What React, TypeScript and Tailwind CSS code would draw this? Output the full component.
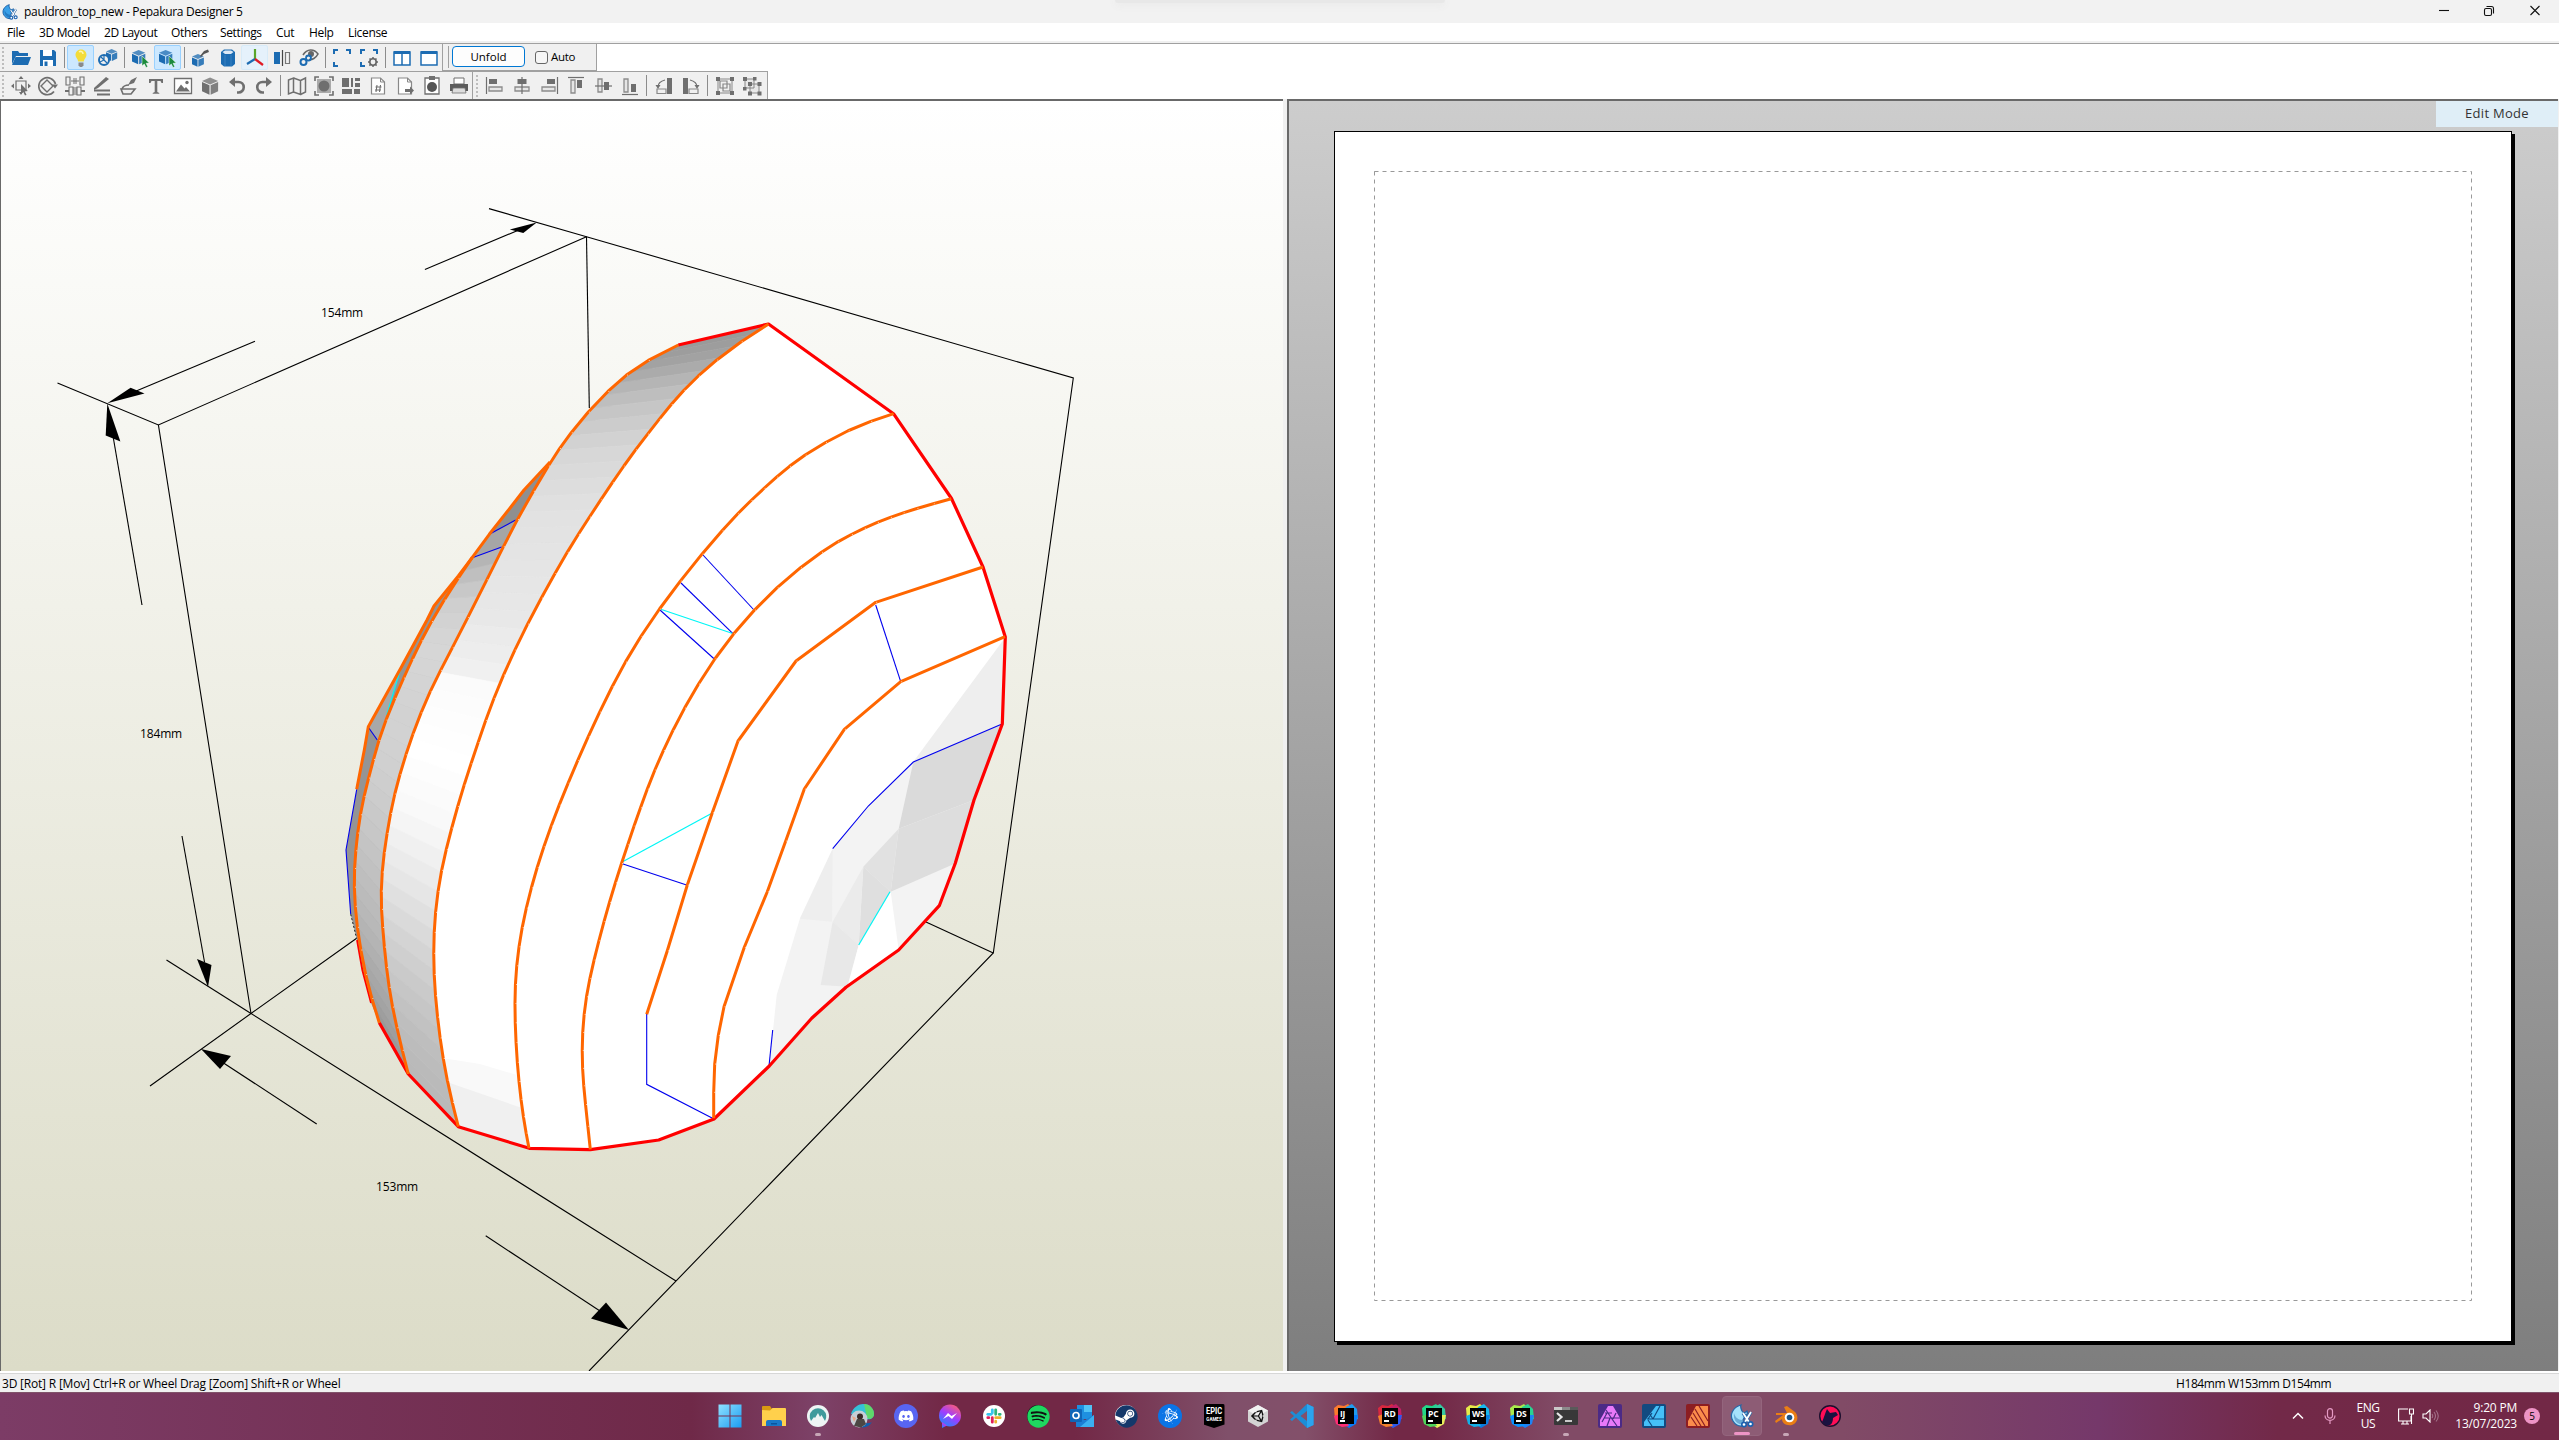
import React from "react";
import { FaDiscord, FaSpotify, FaSteam, FaBattleNet, FaUnity } from "react-icons/fa";

type Pt = [number, number];

const UI = "font-['Open_Sans','Noto_Sans',sans-serif]";

/* ---------- 3D model data ---------- */

/** Evens out small kinks between neighbouring vertices, keeping both ends. */
const smooth = (p: Pt[]): Pt[] =>
  p.map((q, i) =>
    i === 0 || i === p.length - 1
      ? q
      : [q[0] / 2 + (p[i - 1][0] + p[i + 1][0]) / 4, q[1] / 2 + (p[i - 1][1] + p[i + 1][1]) / 4],
  );

const seamA: Pt[] = smooth([
  [678.3, 345], [644, 361], [626.7, 374.7], [608.3, 390], [588.3, 411], [568.3, 436], [560, 447.7], [550, 462.7],
  [533.3, 491], [516.7, 520], [503.3, 546.7], [490, 574], [464.3, 624], [452.3, 648.3], [440, 670.7], [430, 691.7],
  [420.7, 712.7], [412.7, 734.3], [405.7, 755], [399.500, 775], [394.7, 794], [390.3, 813], [387, 834], [384, 852.7],
  [382, 871.7], [381, 891.7], [381.3, 909], [382.6, 927], [384.3, 946.7], [386.4, 967.7], [389, 987.3],
  [392.3, 1006.7], [396.7, 1027], [402, 1050], [408.3, 1074],
]);
const seamB: Pt[] = smooth([
  [768.5, 324], [741, 341], [714.3, 361.3], [697.7, 376.3], [683.500, 390], [671, 404.500], [659.3, 419], [647.7, 434], [635.7, 449.3],
  [623.7, 466], [612.3, 482.7], [601, 499.3], [589.3, 517.3], [578.3, 534.3], [567.500, 551.3], [555.5, 572.500],
  [541.3, 597.7], [527.3, 624], [514.7, 650], [503, 675.7], [493.7, 698.3], [485.500, 720.7], [478, 742.7],
  [471, 763.8], [464, 785], [457.600, 806.3], [451.6, 828.3], [446.2, 849], [441.3, 870.3], [437.8, 891.7],
  [435.3, 912.3], [434, 932.3], [433.5, 953.3], [434, 974.3], [435.3, 995.7], [437.500, 1017.3], [440, 1038],
  [443, 1058.3], [447, 1079.7], [452, 1102], [458.3, 1126.7],
]);
const seamBack: Pt[] = [
  [550, 462], [524, 490], [509.3, 509], [489.3, 534.3], [472.3, 557.3], [458.3, 576], [434, 606], [427, 620],
  [401, 667.7], [368.3, 726.7], [364.3, 750], [356.7, 789.3],
];
const seamD: Pt[] = smooth([
  [472.3, 557.3], [458, 578], [444, 600], [430.7, 622.3], [421, 641], [412.2, 659], [403.500, 678], [395.5, 697], [385, 721],
  [378.7, 740.7], [373.3, 759.7], [368.500, 778.3], [364, 796], [360, 815], [357.600, 833], [355.7, 850.7], [354.3, 868.3], [354.1, 886.7],
  [355, 906], [357, 926.7], [360.5, 949.3], [365.4, 975], [371.4, 998.3], [379.3, 1022.7],
]);
const seamE: Pt[] = smooth([
  [893.7, 413.7], [870.7, 421], [848, 430], [825.7, 442], [802.7, 456], [789.3, 466.3], [776.7, 476.7],
  [764.3, 488], [751, 500.3], [738, 513.3], [724, 528], [702.3, 553.3], [680, 581], [659, 609], [640, 637],
  [625, 662], [612, 686.500], [599.500, 712], [588, 737], [577.5, 760.7], [568, 783.3], [559, 805], [551, 826.2],
  [543.7, 846.7], [537, 867.3], [531.3, 887.7], [526, 908.3], [522, 927.7], [518.8, 946.7], [516.500, 966],
  [515.2, 984.3], [514.8, 1003.3], [515.1, 1022.7], [516, 1042.7], [517.2, 1062.3], [518.9, 1081.7], [521, 1100],
  [523.3, 1116.7], [526.1, 1133.3], [529, 1148.3],
]);
const seamF: Pt[] = smooth([
  [951.3, 498.7], [933, 503.7], [915.7, 508.7], [903.3, 512.7], [890.3, 517.3], [877.3, 522.3], [864.3, 528], [851.3, 534.3],
  [838.3, 541.3], [823.3, 550.5], [801, 566.7], [776.7, 587], [754, 610], [733.3, 633.3], [714.3, 658.7],
  [698, 684.3], [683.8, 708.7], [672.7, 730.7], [663, 750.7], [654.7, 770], [647, 789.3], [640.5, 807.7],
  [634, 826], [627.7, 844.7], [621.5, 863.2], [615.3, 882.8], [609.4, 902.3], [603.9, 921.7], [598.8, 940.7],
  [594, 960], [589.600, 978.8], [586.3, 996.7], [583.9, 1014.3], [582.5, 1032.3], [582, 1050.7], [582.4, 1068.3], [583.6, 1085.7],
  [585.4, 1103.3], [587.800, 1126], [590.3, 1149.3],
]);
const seamG: Pt[] = [
  [983, 567], [875.7, 602.3], [796, 661], [738, 741], [712.3, 812.7], [687.3, 885], [667.3, 950.7], [646.7, 1014.3],
];
const seamH: Pt[] = [
  [1005, 636.7], [900.7, 681.7], [844.3, 729.3], [804.3, 789], [785.7, 841], [767.3, 891.7], [744.3, 947.3],
  [724, 1006.7], [718.3, 1035.3], [714.7, 1064], [713.7, 1092.3], [713.7, 1118.3],
];
const rim: Pt[] = [
  [768.5, 324], [893.5, 413.7], [951.5, 498.5], [983, 567], [1005.3, 637], [1002.3, 724], [974, 800], [955.3, 863.3],
  [939.3, 905.7], [898.7, 950], [846, 987.3], [811.7, 1018.3], [769.3, 1066], [714, 1119], [658.7, 1140],
  [590.3, 1149.7], [529.3, 1148.3], [458.3, 1126.7], [408.3, 1074], [379.3, 1022.7],
];
const backRim: Pt[] = [[356.7, 789.3], [346, 850], [350.7, 914.3], [357, 940], [362.3, 970], [371, 1003], [379.3, 1022.7]];

const str = (p: Pt[]) => p.map((q) => q.join(",")).join(" ");

/** Point at fraction t of the polyline's length. */
function along(p: Pt[], t: number): Pt {
  const seg = p.slice(1).map((q, i) => Math.hypot(q[0] - p[i][0], q[1] - p[i][1]));
  let d = seg.reduce((a, b) => a + b, 0) * t;
  for (let i = 0; i < seg.length; i++) {
    if (d <= seg[i] || i === seg.length - 1) {
      const k = Math.min(1, d / seg[i]);
      return [p[i][0] + (p[i + 1][0] - p[i][0]) * k, p[i][1] + (p[i + 1][1] - p[i][1]) * k];
    }
    d -= seg[i];
  }
  return p[p.length - 1];
}
function shadeAt(stops: Pt[], t: number) {
  for (let i = 1; i < stops.length; i++) {
    if (t <= stops[i][0]) {
      const k = (t - stops[i - 1][0]) / (stops[i][0] - stops[i - 1][0]);
      return Math.round(stops[i - 1][1] + (stops[i][1] - stops[i - 1][1]) * k);
    }
  }
  return stops[stops.length - 1][1];
}
function Facets({ a, b, n, stops }: { a: Pt[]; b: Pt[]; n: number; stops: Pt[] }) {
  return (
    <>
      {Array.from({ length: n }, (_, i) => {
        const t0 = i / n;
        const t1 = (i + 1) / n;
        const v = shadeAt(stops, (t0 + t1) / 2);
        const c = `rgb(${v},${v},${v})`;
        return (
          <polygon
            key={i}
            points={str([along(a, t0), along(b, t0), along(b, t1), along(a, t1)])}
            fill={c}
            stroke={c}
            strokeWidth="0.7"
          />
        );
      })}
    </>
  );
}
function Seam({ p, dots = true }: { p: Pt[]; dots?: boolean }) {
  return (
    <>
      <polyline points={str(p)} fill="none" stroke="#ff6600" strokeWidth="3" strokeLinejoin="round" />
      {dots && p.slice(1, -1).map((q, i) => <circle key={i} cx={q[0] + 1} cy={q[1]} r="0.5" fill="#fff" opacity="0.8" />)}
    </>
  );
}

const blueEdges: Pt[][] = [
  [[703, 555], [754, 610]],
  [[681, 583], [732.7, 633.3]],
  [[660, 610], [714.3, 659]],
  [[875.7, 605], [900.7, 681.7]],
  [[622.3, 863.7], [687.3, 885.3]],
  [[489.3, 534.3], [515.7, 520]],
  [[472.3, 557.7], [501.7, 547]],
  [[368.3, 727.3], [377.3, 740]],
  [[646.7, 1014], [646.7, 1084.3], [714, 1119]],
  [[1002, 724], [913.3, 762], [868.3, 806], [832.7, 848.7]],
  [[772.7, 1030], [769, 1066]],
  [[356.7, 789.3], [346, 850], [350.7, 914.3]],
];
const cyanEdges: Pt[][] = [
  [[660, 609], [732.7, 633.5]],
  [[621.7, 862.3], [712.3, 813]],
  [[890, 891.7], [858.7, 945]],
  [[401, 667.7], [386.7, 715]],
];
const boxEdges: Pt[][] = [
  [[57.5, 382.9], [158.4, 424.9], [586.5, 236.7]],
  [[489, 208.6], [586.5, 236.7], [1073.3, 378], [993.3, 953], [589, 1371]],
  [[586.5, 236.7], [589.3, 408]],
  [[158.4, 424.9], [251, 1013.5], [676, 1281]],
  [[166.5, 960], [251, 1013.5]],
  [[150, 1086], [251, 1013.5], [357, 938]],
  [[993.3, 953], [926, 922]],
  [[424.9, 269.4], [520, 229.5]],
  [[255, 341.2], [135, 391.6]],
  [[142, 605], [113, 436]],
  [[182, 836], [204.5, 962]],
  [[316.7, 1124], [222, 1062]],
  [[485.7, 1235.8], [600, 1311]],
];
const arrows: Pt[][] = [
  [[536.7, 222.4], [523.3, 233], [509.8, 229.4]],
  [[107.3, 403.3], [130.6, 387.8], [144.5, 393.5]],
  [[107.3, 403.5], [120.4, 441.6], [105.7, 435.5]],
  [[208, 987], [211.5, 965], [197, 959]],
  [[201, 1049], [231, 1056], [220, 1069]],
  [[629, 1330], [606, 1302.5], [591, 1318.5]],
];
const facets: [string, Pt[]][] = [
  ["#f3f3f3", [[1005, 638], [913.3, 762], [868.3, 806], [832.7, 848.7], [800, 918.3], [776.7, 995], [769.3, 1066], [811.7, 1018.3], [846, 987.3], [898.7, 950], [939.3, 905.7], [955.3, 863.3], [974, 800], [1002.3, 724]]],
  ["#eeeeee", [[1005, 638], [913.3, 762], [1002.3, 724]]],
  ["#dadada", [[1002.3, 724], [913.3, 762], [898.7, 828.7], [974, 800]]],
  ["#dddddd", [[898.7, 828.7], [890.7, 891.7], [954, 864], [974, 800]]],
  ["#e1e1e1", [[898.7, 828.7], [890.7, 891.7], [863.3, 866.7]]],
  ["#dfdfdf", [[863.3, 866.7], [890.7, 891.7], [858.7, 945]]],
  ["#ebebeb", [[863.3, 866.7], [832.7, 921.7], [858.7, 945]]],
  ["#e8e8e8", [[832.7, 921.7], [858.7, 945], [848.3, 986.7], [820.7, 985]]],
  ["#eeeeee", [[832.7, 848.7], [800, 918.8], [832, 921.7]]],
  ["#ffffff", [[890.7, 891.7], [858.7, 945], [847, 988], [898.7, 950]]],
];

function Model() {
  return (
    <svg className="block" width="1282" height="1270" viewBox="1 101 1282 1270">
      <g stroke="#000" strokeWidth="1.1" fill="none">
        {boxEdges.map((e, i) => <polyline key={i} points={str(e)} />)}
      </g>
      {arrows.map((a, i) => <polygon key={i} points={str(a)} />)}
      <polygon points={str([...seamA, ...rim.slice(0, 18).reverse()])} fill="#fff" />
      <polygon points={str([...seamBack, ...backRim, ...seamA.slice().reverse()])} fill="#949494" />
      <Facets a={seamD} b={[...seamA.slice(10)]} n={30} stops={[[0, 176], [0.1, 205], [0.2, 214], [0.45, 208], [0.6, 198], [0.75, 184], [0.9, 165], [1, 150]]} />
      <polygon points="550,462 524,490 489.3,534.3 516,520" fill="#8f8f8f" />
      <polygon points="489.3,534.3 516,520 503,547 472.3,557.3" fill="#a6a6a6" />
      <polygon points="401,667.7 368.3,726.7 378,740 387,715" fill="#a8a8a8" />
      <Facets a={seamA} b={seamB} n={46} stops={[[0, 152], [0.05, 160], [0.13, 195], [0.2, 214], [0.28, 225], [0.42, 232], [0.49, 240], [0.51, 251], [0.6, 255], [0.67, 248], [0.75, 230], [0.83, 208], [0.92, 190], [1, 184]]} />
      <polygon points="442,1058 480,1064 517,1075 529,1148 458,1126" fill="#f9f9f9" />
      <polygon points="447,1082 522,1108 529,1148 458,1126" fill="#f0f0f0" />
      {facets.map(([c, p], i) => <polygon key={i} points={str(p)} fill={c} />)}
      <g fill="none" stroke="#0000ee" strokeWidth="1.1">
        {blueEdges.map((e, i) => <polyline key={i} points={str(e)} />)}
      </g>
      <g fill="none" stroke="#00f6f6" strokeWidth="1.2">
        {cyanEdges.map((e, i) => <polyline key={i} points={str(e)} />)}
      </g>
      <polyline points="350.7,914.3 356.5,938" fill="none" stroke="#222" strokeDasharray="2 2" />
      <polyline points="357,940 362.3,970 371,1003" fill="none" stroke="#f00" strokeWidth="1.8" />
      <polyline points={str([[678.3, 345], ...rim])} fill="none" stroke="#f00" strokeWidth="3.2" strokeLinejoin="round" />
      {[seamBack, seamD, seamA, seamB, seamE, seamF, seamG, seamH].map((s, i) => <Seam key={i} p={s} dots={i > 0} />)}
    </svg>
  );
}

/* ---------- toolbar icons, 20 x 20 ---------- */

const B = "#1d6cb2";
const G = "#6f6f6f";

function Ico({ children }: { children: React.ReactNode }) {
  return <svg width="20" height="20" viewBox="0 0 20 20" fill="none">{children}</svg>;
}
const cube = (x: number, y: number, s: number, c = B) => (
  <g transform={`translate(${x} ${y}) scale(${s})`}>
    <path d="M0 3L7 0l7 3-7 3z" fill={c} opacity="0.75" />
    <path d="M0 4l6.5 2.8V15L0 12z" fill={c} />
    <path d="M14 4L7.5 6.800V15l6.500-3z" fill={c} opacity="0.88" />
  </g>
);
const cursor = <path d="M11 8v10l2.300-2 1.700 3.500 1.800-.8-1.700-3.400 3.200-.3z" fill="#1c8a3c" stroke="#fff" strokeWidth=".5" />;

const row1: (React.ReactNode | null)[] = [
  <Ico><path d="M1 3h6l1.500 2H17v3H5L1 16z" fill={B} /><path d="M4.500 9H20l-3 8H1z" fill={B} /></Ico>,
  <Ico><path d="M2 2h14l2 2v14H2z" fill={B} /><path d="M5 2h9v6H5zM5 12h10v6H5z" fill="#fff" /><path d="M6.500 13.500h3V18h-3z" fill={B} /></Ico>,
  null,
  <Ico><path d="M10 1.500c3.500 0 5.500 2.500 5.500 5.500 0 2.700-2.500 4-2.700 6.500H7.200C7 11 4.500 9.700 4.500 7c0-3 2-5.500 5.500-5.500z" fill="#f3dc3a" /><path d="M8 4c2-1.500 4 0 4 2" stroke="#fff7b0" strokeWidth="1.500" /><path d="M7.500 14.500h5v3l-1.500 1.500H9l-1.500-1.500z" fill="#8a8a8a" /></Ico>,
  <Ico>{cube(8, 1, 0.8)}<circle cx="6" cy="12" r="5" fill="#f0f0f0" stroke={B} strokeWidth="2" /><path d="M3 9l6 6M6 7v5l-4 2" stroke={B} strokeWidth="1.200" /></Ico>,
  null,
  <Ico>{cube(1, 2, 0.95)}{cursor}</Ico>,
  <Ico>{cube(1, 2, 0.95)}{cursor}</Ico>,
  null,
  <Ico>{cube(1, 6, 0.85)}<path d="M9 8l4-5 4-1.500L18 4l-5 2-3 3z" fill="#555" /></Ico>,
  <Ico><path d="M3 4l3-2.500h8L17 4v12l-3 2.500H6L3 16z" fill={B} /><path d="M4.500 4L7 2.500h6L15.500 4 13 6H7z" fill="#dbe8f5" /><path d="M7 7v11M13 7v11" stroke="#4d90cb" strokeWidth=".6" /></Ico>,
  <Ico><path d="M10 11V1" stroke="#5aa52b" strokeWidth="2.200" /><path d="M10 11l-8 5" stroke={B} strokeWidth="2.200" /><path d="M10 11l8 6" stroke="#e01b24" strokeWidth="2.200" /></Ico>,
  <Ico><path d="M2 4h6v12H2z" fill={B} /><path d="M10.500 2v16" stroke="#444" strokeWidth="1.200" /><path d="M13.500 4.500h4v11h-4z" stroke="#777" strokeWidth="1.200" /></Ico>,
  <Ico><path d="M4 7c4-6.500 11-6.500 15-1-2 4-6 6-9 5.500" stroke="#666" strokeWidth="1.600" /><circle cx="12" cy="6" r="3" fill="#666" /><circle cx="4.500" cy="14" r="3" stroke={B} strokeWidth="2" /><circle cx="9.500" cy="10" r="2.500" stroke={B} strokeWidth="1.800" /></Ico>,
  null,
  <Ico><path d="M2 6V2h4M14 2h4v4M2 14v4h4" stroke={B} strokeWidth="2" /></Ico>,
  <Ico><path d="M2 6V2h4M14 2h4v4M2 14v4h4" stroke={B} strokeWidth="2" /><circle cx="14" cy="14" r="3.200" stroke="#666" strokeWidth="1.600" /><path d="M14 9v2M14 17v2M9 14h2M17 14h2M10.500 10.500l1.300 1.300M16.300 16.300l1.300 1.300M17.500 10.500l-1.300 1.300M11.700 16.300l-1.300 1.300" stroke="#666" strokeWidth="1.500" /></Ico>,
  null,
  <Ico><path d="M2 4h16v13H2zM10 4v13" stroke={B} strokeWidth="1.500" fill="#fff" /><path d="M2 3h16v3H2z" fill={B} /></Ico>,
  <Ico><path d="M2 4h16v13H2z" stroke={B} strokeWidth="1.500" fill="#fff" /><path d="M2 3h16v3H2z" fill={B} /></Ico>,
];
const row1Active: Record<number, string> = {
  3: "border-[#99d1ff] bg-[#cce8ff]",
  7: "border-[#99d1ff] bg-[#cce8ff]",
  11: "border-[#d8ebf8] bg-[#e5f1fb]",
};

const page = (extra: React.ReactNode) => (
  <Ico><path d="M3.500 2h9l4 4v12h-13z" fill="#fff" stroke="#888" strokeWidth="1.200" /><path d="M12.500 2v4h4" stroke="#888" />{extra}</Ico>
);
const row2a: (React.ReactNode | null)[] = [
  <Ico><path d="M5 5h10v9H5z" stroke={G} strokeWidth="1.200" /><path d="M10 0l2.500 3h-5zM0 10l3-2.500v5zM20 10l-3-2.500v5zM8 16h4l-2 3z" fill={G} /><path d="M10 8v10l2.300-2 1.700 3.500 1.500-.7-1.700-3.400 3-.3z" fill={G} /></Ico>,
  <Ico><path d="M9 4l6 6-6 6-6-6z" stroke={G} strokeWidth="1.400" /><path d="M16 15.500A8.500 8.500 0 1 1 17.500 8" stroke={G} strokeWidth="1.700" /><path d="M14 8.500h6l-3 4z" fill={G} /></Ico>,
  <Ico><path d="M1 1h4v8H1zM15 1h4v8h-4zM4 11h4v8H4zM12 11h4v8h-4z" stroke={G} strokeWidth="1.100" /><path d="M9 2v6M11 2v6M9 11v8M11 11v8M6 5h8" stroke={G} /><path d="M0 15h4M16 15h4" stroke={G} strokeWidth="2" /></Ico>,
  <Ico><path d="M2 12l12-11 3 2L6 12l-4 2z" fill={G} /><path d="M2 14.500h16M5 18.500h13" stroke={G} strokeWidth="2" /></Ico>,
  <Ico><path d="M9 9l3-5 6-3-3 6z" fill={G} /><path d="M2 13h14l-4 5H4z" stroke={G} strokeWidth="1.600" /><path d="M3 13c1-3 4-4 7-4" stroke={G} strokeWidth="1.600" /></Ico>,
  <Ico><path d="M3 3h14v4h-1.500L14.500 5H11.300v11l2 1v.8H6.700V17l2-1V5H5.500L4.500 7H3z" fill={G} /></Ico>,
  <Ico><path d="M1.500 2.500h17v15h-17z" fill="#fff" stroke={G} strokeWidth="1.300" /><path d="M3 15.500l5-7 3.500 4L13 11l4 4.500z" fill={G} /><circle cx="14" cy="6.500" r="1.700" fill={G} /></Ico>,
  <Ico>{cube(2, 1.500, 1.150, G)}</Ico>,
  <Ico><path d="M5 6h6.500a4.500 4.500 0 0 1 0 10.500H10" stroke={G} strokeWidth="2.600" /><path d="M2 6l6-5v10z" fill={G} /></Ico>,
  <Ico><path d="M15 6H8.500a4.500 4.500 0 0 0 0 10.500H10" stroke={G} strokeWidth="2.600" /><path d="M18 6l-6-5v10z" fill={G} /></Ico>,
  null,
  <Ico><path d="M1.500 4l5-2v14l-5 2zM6.500 2l7 2.500v14l-7-2.500M13.500 4.500l5-2.500v14l-5 2.500" stroke={G} strokeWidth="1.500" /></Ico>,
  <Ico><path d="M1 5V1h4M15 1h4v4M19 15v4h-4M5 19H1v-4" stroke={G} strokeWidth="1.600" /><path d="M3 3h14v14H3z" fill="#aaa" /><circle cx="10" cy="10" r="5.500" fill={G} /></Ico>,
  <Ico><path d="M1 2h7v9H1zM1 13h10v5H1zM10 2h2v9h-2zM14 2h5v3h-5zM14 7h5v4h-5zM13 13h6v5h-6z" fill={G} /></Ico>,
  page(<path d="M9 9l-1 7M12.500 9l-1 7M7.500 11h6M7 14h6" stroke={G} strokeWidth="1.100" />),
  page(<path d="M10 13h5v-2.500l4 4-4 4V16h-5z" fill={G} />),
  <Ico><path d="M3 2h14v16H3z" stroke={G} strokeWidth="1.300" fill="#fff" /><path d="M7 0h6v4H7z" fill={G} /><circle cx="10" cy="11" r="5" fill="#555" /></Ico>,
  <Ico><path d="M5 2h10v6H5z" stroke={G} fill="#fff" /><path d="M1 8h18v7H1z" fill="#5c5c5c" /><path d="M4 12h12l1 5H3z" fill="#ddd" stroke={G} strokeWidth=".8" /></Ico>,
];
const bar = (d1: string, d2: string, line: string) => (
  <Ico><path d={d1} fill={G} /><path d={d2} stroke="#8c8c8c" strokeWidth="1.300" fill="#e6e6e6" /><path d={line} stroke={G} strokeWidth="1.200" /></Ico>
);
const row2b: (React.ReactNode | null)[] = [
  bar("M4 3h8v5H4z", "M4 11h13v4H4z", "M1.500 1v17"),
  bar("M5.500 3h9v5h-9z", "M3 11h14v4H3z", "M10 1v17"),
  bar("M8 3h8v5H8z", "M3 11h13v4H3z", "M18.500 1v17"),
  bar("M11 4h5v8h-5z", "M5 4h4v13H5z", "M2 1.500h16"),
  bar("M11 6h5v8h-5z", "M5 3h4v13H5z", "M2 10h17"),
  bar("M11 8h5v8h-5z", "M4 3h4v13H4z", "M2 18.500h16"),
  null,
  <Ico><path d="M13 2h5v16h-5z" fill={G} /><path d="M3 13h9v4.500H3z" stroke="#888" strokeWidth="1.200" /><path d="M4 11c0-4 3-6 7-7" stroke={G} strokeWidth="1.200" /><path d="M1.500 9h5L4 13z" fill={G} /></Ico>,
  <Ico><path d="M2 2h5v16H2z" fill={G} /><path d="M8 13h9v4.500H8z" stroke="#888" strokeWidth="1.200" /><path d="M16 11c0-4-3-6-7-7" stroke={G} strokeWidth="1.200" /><path d="M18.500 9h-5l2.500 4z" fill={G} /></Ico>,
  null,
  <Ico><path d="M3 3h14v14H3z" stroke="#888" /><path d="M5 5h7v7H5zM8 8h7v7H8z" stroke="#888" strokeWidth="1.200" /><path d="M1 1h4v4H1zM15 1h4v4h-4zM1 15h4v4H1zM15 15h4v4h-4z" fill={G} /></Ico>,
  <Ico><path d="M3 3h9v9H3zM8 8h9v9H8z" stroke="#888" fill="#e8e8e8" /><path d="M1 1h4v4H1zM11 1h3.500v3.500H11zM1 11h3.500v3.500H1zM6 6h4v4H6zM15.500 6h4v4h-4zM6 15.500h4v4H6zM15.500 15.500h4v4h-4z" fill={G} /></Ico>,
];

function Tools({ items, sep, active = {} }: { items: (React.ReactNode | null)[]; sep: "a" | "b"; active?: Record<number, string> }) {
  return (
    <>
      {items.map((it, i) =>
        it === null ? (
          <div key={i} className={`flex h-full shrink-0 items-center justify-center ${sep === "a" ? "w-[6px]" : "w-[7px]"}`}>
            <div className="h-[21px] w-px bg-[#8c8c8c]" />
          </div>
        ) : (
          <div key={i} className={`flex h-[25px] w-[27px] shrink-0 items-center justify-center rounded-[2px] border ${active[i] ?? "border-transparent"}`}>
            {it}
          </div>
        ),
      )}
    </>
  );
}
function Grip() {
  return (
    <div className="flex w-[7px] shrink-0 flex-col justify-center gap-[2px] pl-[2px]">
      {[0, 1, 2, 3, 4, 5].map((i) => <div key={i} className="h-[2px] w-[2px] bg-[#bdbdbd]" />)}
    </div>
  );
}

/** Crescent with scissors; the title bar uses a deeper blue than the taskbar. */
function AppIcon({ size, light, dark }: { size: number; light: string; dark: string }) {
  return (
    <svg width={size} height={size} viewBox="0 0 24 24">
      <path d="M11 1C3 3-1 11 3 17c3 5 8 6 13 4-2-1-3-3-3-5l2-4c2-1 3-3 2-5-2 2-4 2-5 0-1-2-2-4-1-6z" fill={light} stroke={dark} strokeWidth="1.200" />
      <path d="M4 9c1 4 4 7 8 7l1 4c-6 1-10-4-9-11z" fill={dark} opacity="0.45" />
      <path d="M13 9l6 9M21 8l-6 10" stroke={dark} strokeWidth="3.200" />
      <path d="M13 9l6 9M21 8l-6 10" stroke="#fff" strokeWidth="1.800" />
      <circle cx="14" cy="20.500" r="2.200" fill="#fff" stroke="#1d62b0" strokeWidth="1.700" />
      <circle cx="20.500" cy="20" r="2.200" fill="#fff" stroke="#1d62b0" strokeWidth="1.700" />
    </svg>
  );
}

/* ---------- taskbar icons ---------- */

function Jb({ t, colors }: { t: string; colors: [string, string, string, string] }) {
  return (
    <div className="relative flex h-6 w-6 items-center justify-center">
      <svg className="absolute inset-0" width="24" height="24" viewBox="0 0 24 24">
        <path d="M0 4L4 1l6 1 4-2 4 4-8 9-9 3z" fill={colors[0]} />
        <path d="M12 3l6-3 5 5 1 10-8 3-6-9z" fill={colors[1]} />
        <path d="M24 11l-2 9-7 4-7-5 5-8z" fill={colors[2]} />
        <path d="M0 12l8-3 7 13-7 1-6-3z" fill={colors[3]} />
      </svg>
      <div className="relative flex h-[16px] w-[16px] flex-col bg-black pl-[2px]">
        <span className="whitespace-nowrap font-['Open_Sans',sans-serif] text-[8.500px] font-bold leading-[11px] tracking-[-0.200px] text-white">{t}</span>
        <span className="mt-px h-[1.500px] w-[5px] bg-white" />
      </div>
    </div>
  );
}
const sq = (bg: string, fg: string, lines: string) => (
  <svg width="24" height="24" viewBox="0 0 24 24">
    <rect width="24" height="24" rx="2" fill={bg} />
    <path d={lines.split("|")[0]} fill={fg} />
    <path d={lines.split("|")[1]} stroke={bg} strokeWidth="1.200" fill="none" />
  </svg>
);
const taskIcons: { icon: React.ReactNode; mark?: "dot" | "active" }[] = [
  { icon: <svg width="24" height="24" viewBox="0 0 24 24"><defs><linearGradient id="win" x1="0" y1="0" x2="1" y2="1"><stop offset="0" stopColor="#8fe1ff" /><stop offset="1" stopColor="#1b9cf2" /></linearGradient></defs><path d="M.5.500h11v11H.5zM12.500.500h11v11h-11zM.5 12.500h11v11H.5zM12.500 12.500h11v11h-11z" fill="url(#win)" /></svg> },
  { icon: <svg width="24" height="24" viewBox="0 0 24 24"><path d="M0 3a1 1 0 0 1 1-1h7l2 3v3H0z" fill="#d99a12" /><path d="M0 6l8 .5L10.500 4H23a1 1 0 0 1 1 1v17H0z" fill="#ffd04c" /><path d="M4 22v-4a2 2 0 0 1 2-2h12a2 2 0 0 1 2 2v4z" fill="#1a78c8" /><path d="M9 19h6v1.500H9z" fill="#0b559e" /></svg> },
  { icon: <svg width="22" height="22" viewBox="0 0 22 22"><circle cx="11" cy="11" r="11" fill="#eef4f4" /><path d="M4 16A8.300 8.300 0 1 1 18 16l-3.500-6-1.500 2-2-4-3 5-1-1z" fill="#3f9a9c" /></svg>, mark: "dot" },
  { icon: <svg width="24" height="24" viewBox="0 0 24 24"><path d="M1 10C3 3 9 0 13 0c7 0 11 5 11 10 0 4-4 6-7 5z" fill="#35c1d8" /><path d="M14 0c6 0 10 5 10 10 0 4-4 6-7 4z" fill="#5fd86a" /><path d="M8 22c5 3 11 1 14-4-3 2-8 1-8 0z" fill="#0f5fae" /><circle cx="9" cy="15" r="8.500" fill="#c7ced6" /><circle cx="10" cy="12.500" r="3" fill="#3b2a28" /><path d="M4 22l3-7h7l2 5-5 3.500z" fill="#4c4744" /><path d="M2 12l4 2-2 4z" fill="#e9a98b" /></svg> },
  { icon: <div className="flex h-6 w-6 items-center justify-center rounded-full bg-[#5865f2]"><FaDiscord size={16} color="#fff" /></div> },
  { icon: <svg width="24" height="24" viewBox="0 0 24 24"><defs><linearGradient id="msg" x1="0.200" y1="1" x2="0.800" y2="0"><stop offset="0" stopColor="#1a8dff" /><stop offset=".5" stopColor="#a03cff" /><stop offset="1" stopColor="#ff5f72" /></linearGradient></defs><g fill="url(#msg)"><circle cx="12" cy="11.500" r="11" /><path d="M4 18v6l5-2.500z" /></g><path d="M5 15l5-6 3.500 3L19 9l-5 6-3.500-3z" fill="#fff" /></svg> },
  { icon: <div className="flex h-[22px] w-[22px] items-center justify-center rounded-full bg-white"><svg width="16" height="16" viewBox="0 0 16 16" strokeWidth="2.800" strokeLinecap="round"><path d="M1.800 6.300H5" stroke="#36c5f0" /><path d="M6.300 1.800V5" stroke="#36c5f0" /><path d="M9.700 1.800v4.500M14.200 6.300h-1" stroke="#2eb67d" /><path d="M9.700 9.700h4.500M9.700 14.200v-1" stroke="#ecb22e" /><path d="M6.300 9.700v4.500M1.800 9.700h1" stroke="#e01e5a" /></svg></div> },
  { icon: <div className="flex h-[22px] w-[22px] items-center justify-center rounded-full bg-[#111]"><FaSpotify size={23} color="#1ed760" className="shrink-0" /></div> },
  { icon: <svg width="24" height="24" viewBox="0 0 24 24"><path d="M7 1h15v14H7z" fill="#1e90e0" /><path d="M14 1h8v7h-8z" fill="#50c3f5" /><path d="M6 11l9 5 9-5v12H6z" fill="#1b7fd4" /><path d="M24 11v12H10z" fill="#3bb0f0" /><rect y="5" width="12" height="13" rx="1" fill="#0f66b8" /><circle cx="6" cy="11.500" r="3" fill="none" stroke="#fff" strokeWidth="1.700" /></svg> },
  { icon: <div className="flex h-[22px] w-[22px] items-center justify-center rounded-full bg-white"><FaSteam size={23} color="#14386a" className="shrink-0" /></div> },
  { icon: <div className="flex h-6 w-6 items-center justify-center rounded-full bg-[#0a74e6]"><FaBattleNet size={16} color="#fff" /></div> },
  { icon: <div className="flex h-6 w-[21px] flex-col items-center rounded-t-[2px] bg-black [clip-path:polygon(0_0,100%_0,100%_85%,50%_100%,0_85%)]"><span className="origin-top scale-y-[1.300] pt-[2px] font-['Roboto',sans-serif] text-[7.500px] font-bold leading-[8px] text-white">EPIC</span><span className="pt-[4px] font-['Roboto',sans-serif] text-[4.500px] font-bold leading-[4px] text-white">GAMES</span></div> },
  { icon: <svg width="22" height="22" viewBox="0 0 22 22"><path d="M11 0l10 5.500v11L11 22 1 16.500v-11z" fill="#d4d4d4" /><path d="M11 0l10 5.500L11 11 1 5.500z" fill="#f2f2f2" /><g transform="translate(3.500 3.500)"><FaUnity size={15} color="#111" /></g></svg> },
  { icon: <svg width="24" height="24" viewBox="0 0 24 24"><path d="M17 0l6.500 3v18L17 24 6 13.500 2 17l-2-1.500L4 12 0 8.500 2 7l4 3.500zM17 7l-6.500 5 6.500 5z" fill="#1c8dd6" /><path d="M17 0l6.500 3v18L17 24z" fill="#2ba4ee" /></svg> },
  { icon: <Jb t="IJ" colors={["#fc7a2c", "#1f9cf0", "#087cfa", "#fe2d74"]} /> },
  { icon: <Jb t="RD" colors={["#d8283f", "#c21f63", "#2a5af0", "#f5822c"]} /> },
  { icon: <Jb t="PC" colors={["#21d789", "#35c8a0", "#e8ee5c", "#4fd35b"]} /> },
  { icon: <Jb t="WS" colors={["#e6ea4a", "#15b8f0", "#0a7de0", "#12b0e8"]} /> },
  { icon: <Jb t="DS" colors={["#a9ea4c", "#29d391", "#1d83f4", "#0a92ff"]} /> },
  { icon: <svg width="24" height="18" viewBox="0 0 24 18"><rect width="24" height="18" rx="1" fill="#383838" /><path d="M0 0h8v3H0z" fill="#c9c9c9" /><path d="M8 0h8v3H8z" fill="#8a8a8a" /><path d="M16 0h8v3h-8z" fill="#5a5a5a" /><path d="M3 6l4.500 4L3 14" stroke="#e8e8e8" strokeWidth="2.200" fill="none" /><path d="M11 14h7" stroke="#eee" strokeWidth="1.600" /></svg>, mark: "dot" },
  { icon: sq("#4b2a86", "#e879f9", "M10 2h5l7 12v8H2v-6z|M8 6l6 9M14 9H7M9 9l-5 9M6 14h16M12 14l-3 8M15 15l3-6M14 15l5 7") },
  { icon: sq("#134a80", "#45c0f8", "M14 2h8v20H2v-4z|M10 9l-4 6M5 15h17M11 15l-4-6M11 15L18 2M6 16l4 6") },
  { icon: sq("#8c1d22", "#fb8c4c", "M10 2h12v20H2v-5z|M9 5l10 17M7 9l8 13M5 13l6 9M13 2l9 15") },
  { icon: <AppIcon size={24} light="#a5e2fb" dark="#2468a8" />, mark: "active" },
  { icon: <svg width="23" height="20" viewBox="0 0 23 20"><path d="M9 1l3-1 8 6c4 4 3 11-3 13-6 1-10-2-10-6l-6 4-1-2 8-6H1V7h11z" fill="#ea7e14" /><circle cx="14.500" cy="11.500" r="4.800" fill="#fff" /><circle cx="14.500" cy="11.500" r="2.800" fill="#1d5688" /></svg>, mark: "dot" },
  { icon: <svg width="22" height="22" viewBox="0 0 22 22"><circle cx="11" cy="11" r="10.300" fill="#ff0d56" stroke="#1b0f2e" strokeWidth="1.400" /><path d="M3 17c2-4 3-9 5-13l3 4 6-1 2 3-5 3c0 3-1 6-3 7-3 1-6 0-8-3z" fill="#1a1240" /></svg> },
];

const menu: [string, string][] = [
  ["File", "w-[32px]"],
  ["3D Model", "w-[65px]"],
  ["2D Layout", "w-[67px]"],
  ["Others", "w-[49px]"],
  ["Settings", "w-[56px]"],
  ["Cut", "w-[33px]"],
  ["Help", "w-[39px]"],
  ["License", "w-[50px]"],
];

export default function App() {
  return (
    <div className={`flex h-[1440px] w-[2559px] flex-col overflow-hidden bg-white text-[12px] text-black ${UI}`}>
      {/* title bar */}
      <div className="relative flex h-[23px] shrink-0 items-center bg-[#f2f2f2] pl-[2px]">
        <AppIcon size={16} light="#3aa0e8" dark="#0d4f98" />
        <span className="ml-[6px] whitespace-pre pt-px text-[12px] leading-[16px] tracking-[-0.300px]">pauldron_top_new - Pepakura Designer 5</span>
        <div className="absolute left-[1115px] top-0 h-[3px] w-[330px] rounded-b bg-[#e8e8e8] shadow-[0_1px_8px_#e0e0e0]" />
        <div className="ml-auto flex items-center">
          <svg width="126" height="20" viewBox="0 0 126 20" fill="none" stroke="#111" strokeWidth="1.100">
            <path d="M6 8.500h10" />
            <rect x="51.500" y="6.500" width="7" height="7" rx="1.500" />
            <path d="M53.500 4.500h5a2 2 0 0 1 2 2v5" />
            <path d="M97.500 4l9 9M106.500 4l-9 9" />
          </svg>
        </div>
      </div>
      {/* menu bar */}
      <div className="flex h-[18px] shrink-0 items-center bg-white pl-[7px]">
        {menu.map(([m, w]) => (
          <span key={m} className={`${w} shrink-0 whitespace-nowrap pt-[2px] leading-[18px] tracking-[-0.350px]`}>{m}</span>
        ))}
      </div>
      <div className="h-[3px] shrink-0 border-b border-[#a0a0a0] bg-[#f0f0f0]" />
      {/* tool bars */}
      <div className="flex h-[28px] w-[768px] shrink-0 border-b border-[#a0a0a0]">
        <div className="flex w-[443px] items-center border-r border-[#a0a0a0] bg-[#f0f0f0]">
          <Grip />
          <Tools items={row1} sep="a" active={row1Active} />
        </div>
        <div className="flex w-[154px] items-center border-b border-r border-[#a0a0a0] bg-[#f0f0f0]">
          <div className="ml-[4px] h-[22px] w-[2px] border-r border-[#a0a0a0]" />
          <div className="mb-px ml-[3px] flex h-[21px] w-[73px] items-center justify-center rounded-[4px] border border-[#0078d4] bg-[#fdfdfd] text-[11.500px] leading-none">Unfold</div>
          <div className="ml-[10px] h-[13px] w-[13px] rounded-[3px] border border-[#666] bg-[#f6f6f6]" />
          <span className="ml-[3px] text-[11.500px] leading-none tracking-[-0.300px]">Auto</span>
        </div>
      </div>
      <div className="flex h-[27px] w-[768px] shrink-0 border-r border-[#a0a0a0] bg-[#f0f0f0]">
        <div className="flex w-[473px] items-center border-r border-[#a0a0a0]">
          <Grip />
          <Tools items={row2a} sep="a" />
        </div>
        <div className="flex items-center pl-px">
          <Grip />
          <Tools items={row2b} sep="b" />
        </div>
      </div>
      {/* work area */}
      <div className="flex h-[1272px] shrink-0 bg-[#f0f0f0]">
        <div className="relative w-[1283px] shrink-0 border-l border-t-2 border-[#696969] bg-linear-to-b from-white to-[#dcdcc8]">
          <Model />
          <span className="absolute left-[320px] top-[203px] leading-[18px] tracking-[-0.150px]">154mm</span>
          <span className="absolute left-[139px] top-[624px] leading-[18px] tracking-[-0.150px]">184mm</span>
          <span className="absolute left-[375px] top-[1077px] leading-[18px] tracking-[-0.150px]">153mm</span>
        </div>
        <div className="relative ml-[4px] w-[1271px] shrink-0 border-l-2 border-t-2 border-[#696969] bg-linear-to-b from-[#cdcdcd] to-[#7e7e7e]">
          <div className="ml-[45px] mt-[30px] h-[1211px] w-[1178px] border border-black bg-white p-[39px] shadow-[3px_3px_0_#000]">
            <svg className="block" width="1098" height="1131" fill="none">
              <rect x="0.500" y="0.500" width="1097" height="1129" stroke="#999" strokeDasharray="4 4" />
            </svg>
          </div>
          <div className="absolute right-0 top-0 flex h-[26px] w-[122px] items-center justify-center bg-[#dfeef7] text-[13px] tracking-[0.300px] text-[#333]">Edit Mode</div>
        </div>
      </div>
      {/* status bar */}
      <div className="mt-[2px] flex h-[19px] shrink-0 items-center border-t border-[#d7d7d7] bg-[#f0f0f0]">
        <span className="w-[2176px] pl-[2px] pt-[2px] leading-[18px] tracking-[-0.200px]">3D [Rot] R [Mov] Ctrl+R or Wheel Drag [Zoom] Shift+R or Wheel</span>
        <span className="pt-[2px] leading-[18px] tracking-[-0.400px]">H184mm W153mm D154mm</span>
      </div>
      {/* taskbar */}
      <div className="flex h-12 grow items-center border-t border-[#80536a] bg-[linear-gradient(90deg,#7c3c66_0,#6f2948_27%,#7d4268_32%,#722846_37%,#722846_42%,#80506a_48%,#83506a_51%,#722846_54.500%,#722846_56%,#814b66_61%,#814b66_72%,#75386a_82%,#722948_89%,#722846_100%)]">
        <div className="mb-px ml-[708px] flex">
          {taskIcons.map((t, i) => (
            <div key={i} className={`relative mx-[2px] flex h-10 w-10 items-center justify-center rounded-[4px] ${t.mark === "active" ? "border border-[#94657d] bg-[#8d5c75]" : ""}`}>
              {t.icon}
              {t.mark && <div className={`absolute bottom-0 h-[3px] rounded-full ${t.mark === "active" ? "w-4 bg-[#ee94c6]" : "w-[6px] bg-[#c7a6b6]"}`} />}
            </div>
          ))}
        </div>
        <div className="mb-px ml-auto flex items-center text-white">
          <svg width="12" height="8" viewBox="0 0 12 8" fill="none" stroke="#fff" strokeWidth="1.500"><path d="M1 6.500l5-5 5 5" /></svg>
          <svg className="ml-[20px]" width="12" height="16" viewBox="0 0 12 16" fill="none" stroke="#e59ac4" strokeWidth="1.200"><rect x="3.500" y=".6" width="5" height="9.500" rx="2.500" /><path d="M1 7.500c0 6.500 10 6.500 10 0M6 12.500V16" /></svg>
          <div className="ml-[20px] w-[24px] text-center text-[12px] leading-[16px] tracking-[-0.400px]">ENG<br />US</div>
          <svg className="ml-[18px]" width="16" height="17" viewBox="0 0 16 17" fill="none" stroke="#fff" strokeWidth="1.100"><path d="M10 1H.6v12H13V8M3 16h8M5 13v3M9 13v3M11.500 1h4v5h-4zM13.500 6v10" /></svg>
          <svg className="ml-[8px]" width="17" height="14" viewBox="0 0 17 14" fill="none" stroke="#fff" strokeWidth="1.100"><path d="M1 5h3l4-4v12L4 9H1z" /><path d="M10 5q1.500 2 0 4M12 3q3 4 0 8M14 1.500q4.500 5.500 0 11" stroke="#a27088" /></svg>
          <div className="ml-[12px] w-[66px] text-right text-[12px] leading-[16px] tracking-[-0.200px]">9:20 PM<br />13/07/2023</div>
          <div className="ml-[7px] mr-[19px] flex h-4 w-4 items-center justify-center rounded-full bg-[#ee94c6] text-[10px] leading-none text-black">5</div>
        </div>
      </div>
    </div>
  );
}
